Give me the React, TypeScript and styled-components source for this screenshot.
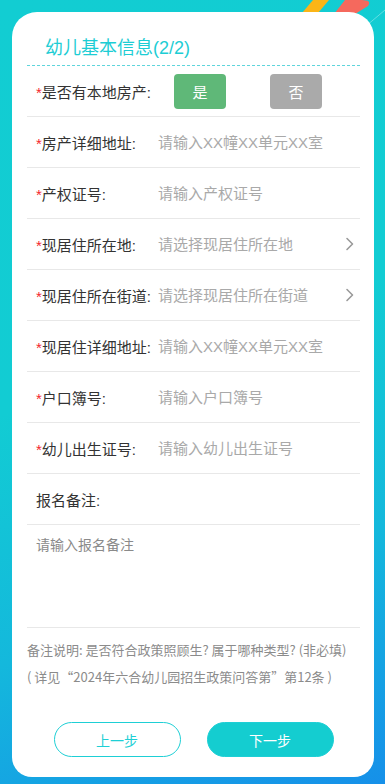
import React from 'react';
import styled, { createGlobalStyle } from 'styled-components';

type Field = {
  label: string;
  placeholder: string;
  required?: boolean;
  select?: boolean;
};

const fields: Field[] = [
  { label: '房产详细地址:', placeholder: '请输入XX幢XX单元XX室', required: true },
  { label: '产权证号:', placeholder: '请输入产权证号', required: true },
  { label: '现居住所在地:', placeholder: '请选择现居住所在地', required: true, select: true },
  { label: '现居住所在街道:', placeholder: '请选择现居住所在街道', required: true, select: true },
  { label: '现居住详细地址:', placeholder: '请输入XX幢XX单元XX室', required: true },
  { label: '户口簿号:', placeholder: '请输入户口簿号', required: true },
  { label: '幼儿出生证号:', placeholder: '请输入幼儿出生证号', required: true }
];

const GlobalStyle = createGlobalStyle`
  html, body {
    margin: 0;
    padding: 0;
  }
  body {
    font-family: "Liberation Sans", "Noto Sans CJK SC", sans-serif;
  }
  * {
    box-sizing: border-box;
  }
`;

const Chevron: React.FC = () => (
  <svg width="9" height="14" viewBox="0 0 9 14" fill="none">
    <path d="M2 1.5L7.5 7L2 12.5" stroke="#9a9a9a" strokeWidth="1.6" strokeLinecap="round" strokeLinejoin="round" />
  </svg>
);

const App: React.FC = () => {
  const [owned, setOwned] = React.useState(true);

  return (
    <Page>
      <GlobalStyle />
      <Stripes width="385" height="14" viewBox="0 0 385 14">
        <polygon points="313,0 329,0 318,13 302,13" fill="#fbb517" />
        <path d="M334 14 L345 0 L362 0 Q372 0 368 6 L355 14 Z" fill="#f5695d" />
        <line x1="366" y1="26" x2="385" y2="10" stroke="rgba(255,255,255,0.35)" strokeWidth="1" />
      </Stripes>
      <Card>
        <Title>幼儿基本信息(2/2)</Title>
        <Row>
          <Label>
            <Star>*</Star>是否有本地房产:
          </Label>
          <Choices>
            <Choice $active={owned} onClick={() => setOwned(true)}>
              是
            </Choice>
            <Choice $active={!owned} onClick={() => setOwned(false)}>
              否
            </Choice>
          </Choices>
        </Row>
        {fields.map(field => (
          <Row key={field.label}>
            <Label>
              {field.required && <Star>*</Star>}
              {field.label}
            </Label>
            <Input placeholder={field.placeholder} readOnly={field.select} />
            {field.select && (
              <Arrow>
                <Chevron />
              </Arrow>
            )}
          </Row>
        ))}
        <Row>
          <Label>报名备注:</Label>
        </Row>
        <Remark placeholder="请输入报名备注" />
        <Note>
          <p>备注说明: 是否符合政策照顾生? 属于哪种类型? (非必填)</p>
          <p>( 详见“2024年六合幼儿园招生政策问答第”第12条 )</p>
        </Note>
        <Actions>
          <StepButton>上一步</StepButton>
          <StepButton $primary>下一步</StepButton>
        </Actions>
      </Card>
    </Page>
  );
};

const Page = styled.div`
  position: relative;
  width: 385px;
  height: 784px;
  padding: 12px 11px 7px 12px;
  background: linear-gradient(160deg, #12cdd2 0%, #12ccd3 45%, #14b8dc 72%, #1690e9 100%);
  overflow: hidden;
`;

const Stripes = styled.svg`
  position: absolute;
  top: 0;
  left: 0;
  overflow: visible;
`;

const Card = styled.div`
  position: relative;
  display: flex;
  flex-direction: column;
  height: 765px;
  padding: 0 14px 20px 15px;
  background: #fff;
  border-radius: 25px 25px 20px 20px;
`;

const Title = styled.h1`
  display: flex;
  align-items: center;
  height: 54px;
  margin: 0;
  padding: 14px 0 0 18px;
  border-bottom: 1px dashed #5fd5dc;
  color: #1dcdd4;
  font-size: 18px;
  font-weight: normal;
`;

const Row = styled.div`
  display: flex;
  align-items: center;
  height: 51px;
  padding-left: 9px;
  border-bottom: 1px solid #e8e8e8;
`;

const Label = styled.span`
  flex: 0 0 122px;
  color: #333;
  font-size: 15px;
  white-space: nowrap;
`;

const Star = styled.span`
  color: #f4262d;
`;

const Choices = styled.div`
  display: flex;
  gap: 44px;
  margin-left: 16px;
`;

const Choice = styled.button<{ $active: boolean }>`
  width: 52px;
  height: 35px;
  border: none;
  border-radius: 4px;
  background: ${p => (p.$active ? '#5fb878' : '#aaaaaa')};
  color: #fff;
  font-family: inherit;
  font-size: 15px;
  cursor: pointer;
`;

const Input = styled.input`
  flex: 1;
  min-width: 0;
  padding: 0;
  border: none;
  outline: none;
  background: transparent;
  color: #333;
  font-family: inherit;
  font-size: 15px;

  &::placeholder {
    color: #a9a9a9;
  }
`;

const Arrow = styled.span`
  display: flex;
  align-items: center;
  margin-right: 6px;
`;

const Remark = styled.textarea`
  height: 103px;
  padding: 9px 9px 0;
  border: none;
  border-bottom: 1px solid #e8e8e8;
  outline: none;
  resize: none;
  color: #333;
  font-family: inherit;
  font-size: 14px;

  &::placeholder {
    color: #8a8a8a;
  }
`;

const Note = styled.div`
  padding-top: 8px;
  color: #8b8b8b;
  font-family: "Noto Sans CJK SC", sans-serif;
  font-size: 13px;
  line-height: 27px;

  p {
    margin: 0;
  }
`;

const Actions = styled.div`
  display: flex;
  justify-content: center;
  gap: 26px;
  margin-top: auto;
`;

const StepButton = styled.button<{ $primary?: boolean }>`
  width: 127px;
  height: 35px;
  border: 1px solid #1ecfd5;
  border-radius: 18px;
  background: ${p => (p.$primary ? '#14cdd0' : '#fff')};
  color: ${p => (p.$primary ? '#fff' : '#1ecfd5')};
  font-family: inherit;
  font-size: 14px;
  cursor: pointer;
`;

export default App;
